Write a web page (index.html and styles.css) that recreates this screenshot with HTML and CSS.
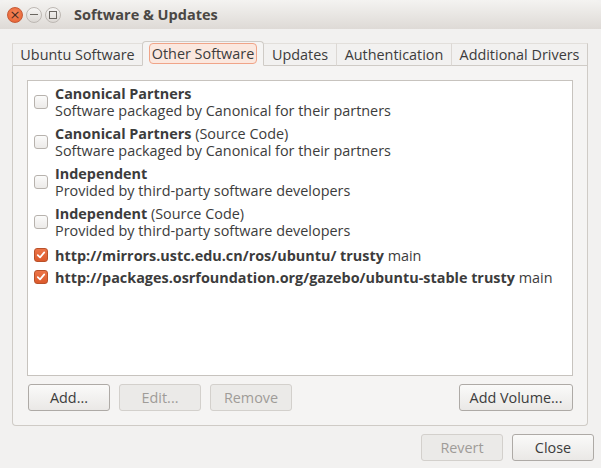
FILE: index.html
```html
<!DOCTYPE html>
<html lang="en">
<head>
  <meta charset="UTF-8" />
  <title>Software &amp; Updates</title>
  <link rel="stylesheet" href="styles.css">
</head>
<body>
  <div class="window">
    <div class="titlebar">
      <span class="wbtn close">&#215;</span>
      <span class="wbtn min"><i class="min-bar"></i></span>
      <span class="wbtn max"><i class="max-box"></i></span>
      <span class="title">Software &amp; Updates</span>
    </div>

    <div class="content">
      <div class="tabs">
        <div class="tab tab-first">Ubuntu Software</div>
        <div class="tab active"><span class="focus">Other Software</span></div>
        <div class="tab sep">Updates</div>
        <div class="tab sep">Authentication</div>
        <div class="tab last">Additional Drivers</div>
      </div>

      <div class="page">
        <div class="list">
          <div class="row">
            <span class="check"></span>
            <div class="text">
              <div><b>Canonical Partners</b></div>
              <div>Software packaged by Canonical for their partners</div>
            </div>
          </div>
          <div class="row">
            <span class="check"></span>
            <div class="text">
              <div><b>Canonical Partners</b> (Source Code)</div>
              <div>Software packaged by Canonical for their partners</div>
            </div>
          </div>
          <div class="row">
            <span class="check"></span>
            <div class="text">
              <div><b>Independent</b></div>
              <div>Provided by third-party software developers</div>
            </div>
          </div>
          <div class="row">
            <span class="check"></span>
            <div class="text">
              <div><b>Independent</b> (Source Code)</div>
              <div>Provided by third-party software developers</div>
            </div>
          </div>
          <div class="row single">
            <span class="check on">
              <svg viewBox="0 0 14 14" width="14" height="14"><path d="M3.2 7.2 L5.9 9.8 L10.8 3.9" fill="none" stroke="#fff" stroke-width="2" stroke-linecap="round" stroke-linejoin="round"/></svg>
            </span>
            <div class="text"><b>http://mirrors.ustc.edu.cn/ros/ubuntu/ trusty</b> main</div>
          </div>
          <div class="row single">
            <span class="check on">
              <svg viewBox="0 0 14 14" width="14" height="14"><path d="M3.2 7.2 L5.9 9.8 L10.8 3.9" fill="none" stroke="#fff" stroke-width="2" stroke-linecap="round" stroke-linejoin="round"/></svg>
            </span>
            <div class="text"><b>http://packages.osrfoundation.org/gazebo/ubuntu-stable trusty</b> main</div>
          </div>
        </div>

        <div class="page-actions">
          <button class="btn">Add...</button>
          <button class="btn" disabled>Edit...</button>
          <button class="btn" disabled>Remove</button>
          <span class="spacer"></span>
          <button class="btn wide">Add Volume...</button>
        </div>
      </div>

      <div class="dialog-actions">
        <button class="btn" disabled>Revert</button>
        <button class="btn">Close</button>
      </div>
    </div>
  </div>
</body>
</html>
```

FILE: styles.css
```css
body {
  margin: 0;
  background: #f2f1f0;
  font-family: "Open Sans", "Noto Sans", sans-serif;
  font-size: 14.4px;
  color: #3c3c3c;
}
.window {
  width: 601px;
  height: 468px;
  background: #f2f1f0;
  overflow: hidden;
}
.titlebar {
  height: 29px;
  display: flex;
  align-items: center;
  padding-left: 7px;
  background: linear-gradient(to bottom, #f4f3f1, #dedad6);
  border-radius: 6px 6px 0 0;
  box-sizing: border-box;
}
.wbtn {
  width: 16px;
  height: 16px;
  border-radius: 50%;
  margin-right: 3px;
  display: flex;
  align-items: center;
  justify-content: center;
  box-sizing: border-box;
  border: 1px solid #bdb8b3;
  background: linear-gradient(to bottom, #f7f6f5, #dcd8d4);
}
.wbtn.close {
  background: radial-gradient(circle at 50% 40%, #f78a5d, #e45c2c);
  border-color: #c65a36;
  color: #4a2a1e;
  font-size: 13px;
  line-height: 1;
  font-family: "DejaVu Sans", sans-serif;
}
.min-bar {
  width: 8px;
  height: 1px;
  background: #6a6661;
}
.max-box {
  width: 6px;
  height: 6px;
  border: 1px solid #6a6661;
}
.title {
  margin-left: 10px;
  font-weight: bold;
  font-size: 14.5px;
  color: #4a4744;
}
.content {
  padding: 12px 13px 0 12px;
}
.tabs {
  display: flex;
  align-items: flex-end;
  height: 25px;
}
.tab {
  height: 23px;
  line-height: 22px;
  padding: 0;
  text-align: center;
  white-space: nowrap;
  box-sizing: border-box;
  border-bottom: 1px solid #cfcbc6;
}
.tab-first {
  border-left: 1px solid #dcd8d4;
  border-top: 1px solid #e2dfdb;
  width: 130px;
}
.tab.sep {
  border-right: 1px solid #dcd8d4;
  border-top: 1px solid #e2dfdb;
}
.tab.last {
  border-right: 1px solid #cfcbc6;
  border-top: 1px solid #e2dfdb;
}
.tab.active {
  height: 25px;
  width: 122px;
  padding: 1px 6px 0;
  line-height: normal;
  background: #f5f4f3;
  border: 1px solid #cfcbc6;
  border-bottom-color: #f5f4f3;
  border-radius: 4px 4px 0 0;
}
.tab:nth-child(3) {
  width: 73px;
}
.tab:nth-child(4) {
  width: 115px;
}
.tab:nth-child(5) {
  width: 136px;
}
.focus {
  display: block;
  height: 21px;
  line-height: 19px;
  box-sizing: border-box;
  border: 1px solid #f0a488;
  background: #fbe8df;
  border-radius: 4px;
  text-align: center;
}
.page {
  width: 576px;
  height: 360px;
  box-sizing: border-box;
  background: #f5f4f3;
  border: 1px solid #cfcbc6;
  border-top: none;
  border-radius: 0 0 4px 4px;
  padding: 14px 14px 0 14px;
}
.list {
  height: 296px;
  background: #fff;
  border: 1px solid #c7c3be;
  box-sizing: border-box;
  padding-top: 1px;
}
.row {
  display: flex;
  align-items: center;
  gap: 7px;
  padding: 2px 6px;
  height: 40px;
  box-sizing: border-box;
  line-height: 17px;
  white-space: nowrap;
}
.row.single {
  height: 22px;
}
.row:nth-child(5) {
  margin-top: 2px;
}
.text b {
  font-weight: bold;
}
.check {
  width: 14px;
  height: 14px;
  flex: none;
  box-sizing: border-box;
  border: 1px solid #b7b2ad;
  border-radius: 3px;
  background: linear-gradient(to bottom, #fbfbfa, #eceae8);
  display: flex;
  align-items: center;
  justify-content: center;
}
.check.on {
  background: linear-gradient(to bottom, #ec7447, #dc5a2c);
  border-color: #b9512a;
}
.check svg {
  display: block;
}
.page-actions {
  display: flex;
  gap: 9px;
  margin-top: 8px;
  margin-left: 1px;
}
.spacer {
  flex: 1;
}
.btn {
  height: 27px;
  width: 82px;
  font: inherit;
  color: #3c3c3c;
  border: 1px solid #aeaaa6;
  border-radius: 3px;
  background: linear-gradient(to bottom, #fafaf9, #eae8e6);
  padding: 0;
}
.btn.wide {
  width: 114px;
}
.btn:disabled {
  color: #9f9c98;
  border-color: #d3d0cc;
  background: #ebeae8;
}
.dialog-actions {
  display: flex;
  justify-content: flex-end;
  gap: 9px;
  margin-top: 8px;
  margin-right: -6px;
}
```
